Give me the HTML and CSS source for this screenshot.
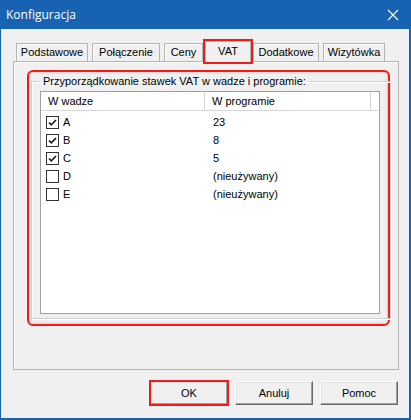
FILE: index.html
```html
<!DOCTYPE html>
<html lang="pl">
<head>
    <meta charset="UTF-8">
    <meta name="viewport" content="width=device-width, initial-scale=1.0">
    <title>Konfiguracja</title>
    <link rel="stylesheet" href="styles.css">
</head>
<body>

    <div class="window">
        <div class="titlebar">
            <span class="title">Konfiguracja</span>
            <svg class="close" width="12" height="12" viewBox="0 0 12 12">
                <path d="M1 1 L11 11 M11 1 L1 11" stroke="#fff" stroke-width="1.1" fill="none"/>
            </svg>
        </div>

        <div class="client">
            <div class="tabs">
                <div class="tab tab-basic">Podstawowe</div>
                <div class="tab tab-conn">Połączenie</div>
                <div class="tab tab-prices">Ceny</div>
                <div class="tab tab-vat active">VAT</div>
                <div class="tab tab-extra">Dodatkowe</div>
                <div class="tab tab-card">Wizytówka</div>
            </div>

            <div class="panel">
                <div class="highlight">
                    <fieldset class="group">
                        <legend>Przyporządkowanie stawek VAT w wadze i programie:</legend>
                        <div class="list">
                            <div class="list-header">
                                <div class="col col-scale">W wadze</div>
                                <div class="col col-prog">W programie</div>
                                <div class="col col-rest"></div>
                            </div>
                            <div class="rows">
                                <div class="row">
                                    <div class="col-scale"><span class="check checked"><svg viewBox="0 0 11 11"><path d="M2 5.5 L4.3 7.8 L9 3" /></svg></span>A</div>
                                    <div class="col-prog">23</div>
                                </div>
                                <div class="row">
                                    <div class="col-scale"><span class="check checked"><svg viewBox="0 0 11 11"><path d="M2 5.5 L4.3 7.8 L9 3" /></svg></span>B</div>
                                    <div class="col-prog">8</div>
                                </div>
                                <div class="row">
                                    <div class="col-scale"><span class="check checked"><svg viewBox="0 0 11 11"><path d="M2 5.5 L4.3 7.8 L9 3" /></svg></span>C</div>
                                    <div class="col-prog">5</div>
                                </div>
                                <div class="row">
                                    <div class="col-scale"><span class="check"></span>D</div>
                                    <div class="col-prog">(nieużywany)</div>
                                </div>
                                <div class="row">
                                    <div class="col-scale"><span class="check"></span>E</div>
                                    <div class="col-prog">(nieużywany)</div>
                                </div>
                            </div>
                        </div>
                    </fieldset>
                </div>
            </div>

            <div class="buttons">
                <button class="btn marked">OK</button>
                <button class="btn">Anuluj</button>
                <button class="btn">Pomoc</button>
            </div>
        </div>
    </div>

</body>
</html>
```

FILE: styles.css
```css
body {
    margin: 0;
    font-family: 'Liberation Sans', Arial, sans-serif;
    font-size: 11px;
    color: #000;
}

.window {
    width: 411px;
    height: 420px;
    box-sizing: border-box;
    background-color: #1862b3;
    padding: 0 2px 2px 1px;
    display: flex;
    flex-direction: column;
}

.titlebar {
    height: 29px;
    display: flex;
    align-items: center;
    justify-content: space-between;
    padding: 0 10px 0 5px;
    color: white;
}

.title {
    font-family: 'Open Sans', sans-serif;
    font-size: 12px;
}

.close {
    display: block;
}

.client {
    flex: 1;
    background-color: #f0f0f0;
    padding: 12px 10px 0 12px;
}

/* tabs */
.tabs {
    display: flex;
    align-items: flex-end;
    height: 20px;
    padding-left: 3px;
}

.tab {
    height: 18px;
    line-height: 17px;
    box-sizing: border-box;
    text-align: center;
    margin-right: 4px;
    border: 1px solid #b4b4b4;
    border-bottom: none;
    box-shadow: inset 1px 1px 0 #fff;
    background-color: #f0f0f0;
    position: relative;
}

.tab-basic { width: 72px; }
.tab-conn { width: 68px; }
.tab-prices { width: 39px; }
.tab-vat { width: 42px; }
.tab-extra { width: 66px; }
.tab-card { width: 62px; }

.tab.active {
    width: 46px;
    height: 21px;
    line-height: 19px;
    margin: 0 2px -1px -2px;
    z-index: 1;
    outline: 2px solid #f01c1c;
    outline-offset: 0;
}

.panel {
    height: 309px;
    box-sizing: border-box;
    border: 1px solid #b4b4b4;
    box-shadow: inset 1px 1px 0 #fff;
    padding: 8px 8px 0 13px;
}

/* red annotation frame */
.highlight {
    border: 2px solid #f01c1c;
    border-radius: 6px;
    padding: 3px 3px 5px 2px;
    box-shadow: inset 0 0 3px rgba(0, 0, 0, 0.25);
}

.group {
    margin: 0;
    padding: 0 10px 4px 8px;
    border: 1px solid #d0d0d0;
    box-shadow: 1px 1px 0 #fff, inset 1px 1px 0 #fff;
}

.group legend {
    padding: 0 3px;
}

.list {
    margin-top: 4px;
    height: 223px;
    box-sizing: border-box;
    border: 1px solid #a0a0a0;
    background-color: white;
}

.list-header {
    display: flex;
    height: 19px;
    line-height: 18px;
    border-bottom: 1px solid #d5d5d5;
    box-sizing: border-box;
}

.list-header .col {
    border-right: 1px solid #d5d5d5;
    padding-left: 7px;
    box-sizing: border-box;
}

.list-header .col-rest {
    flex: 1;
    border-right: none;
}

.col-scale {
    width: 164px;
}

.col-prog {
    width: 166px;
}

.rows {
    padding-top: 2px;
}

.row {
    display: flex;
    height: 18px;
    align-items: center;
}

.row .col-scale {
    display: flex;
    align-items: center;
    padding-left: 5px;
    box-sizing: border-box;
}

.row .col-prog {
    padding-left: 8px;
}

.check {
    width: 13px;
    height: 13px;
    box-sizing: border-box;
    border: 1px solid #333;
    background-color: white;
    margin-right: 4px;
    display: flex;
}

.check svg {
    width: 11px;
    height: 11px;
    fill: none;
    stroke: #1a1a1a;
    stroke-width: 1.7;
}

/* buttons */
.buttons {
    display: flex;
    justify-content: flex-end;
    gap: 7px;
    margin-top: 11px;
    padding-right: 1px;
}

.btn {
    width: 78px;
    height: 24px;
    font-family: 'Liberation Sans', Arial, sans-serif;
    font-size: 11px;
    color: #000;
    background-color: #f0f0f0;
    border: 1px solid;
    border-color: #fff #696969 #696969 #fff;
    box-shadow: inset -1px -1px 0 #a0a0a0, inset 1px 1px 0 #e3e3e3;
    padding: 0;
}

.btn.marked {
    outline: 2px solid #f01c1c;
    outline-offset: -1px;
}
```
